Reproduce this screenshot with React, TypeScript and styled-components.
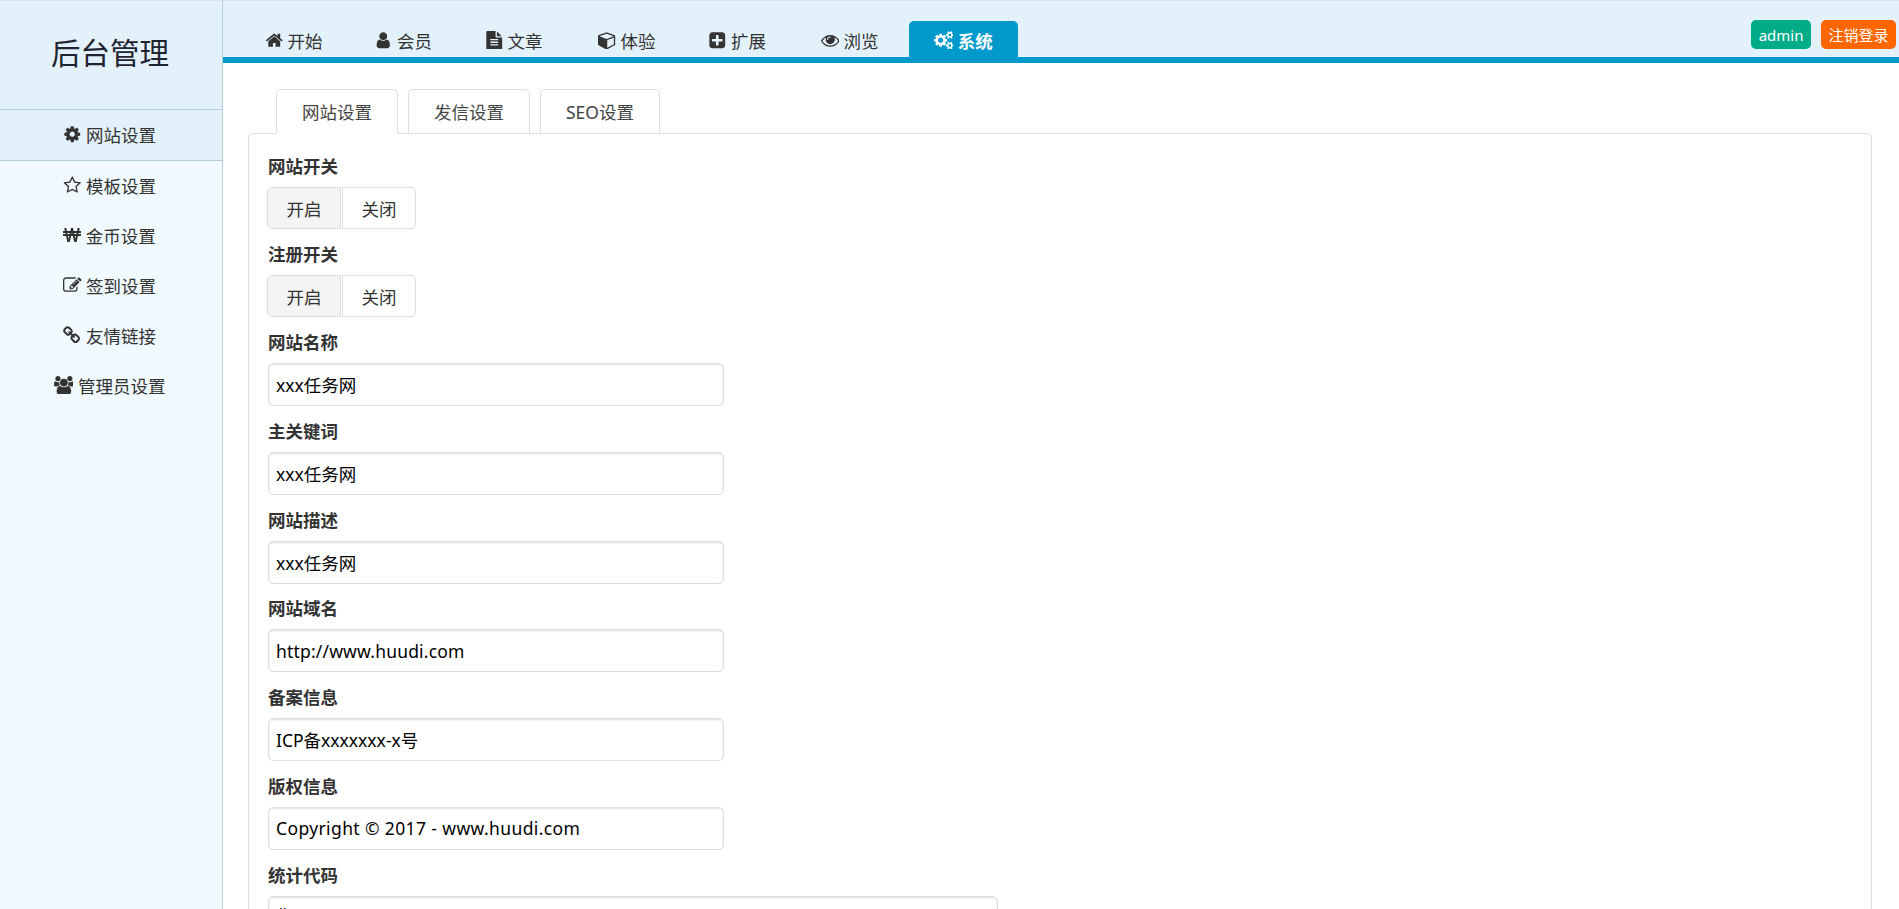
import { ReactNode } from "react";
import { FaWonSign } from "react-icons/fa";
import styled, { createGlobalStyle } from "styled-components";

const FONT = `"Noto Sans", "Noto Sans CJK SC", sans-serif`;

const GlobalStyle = createGlobalStyle`
  html, body {
    margin: 0;
    height: 100%;
    overflow: hidden;
    font-family: ${FONT};
    font-size: 17.5px;
    color: #333;
  }
  * {
    box-sizing: border-box;
  }
`;

// FontAwesome 4 glyphs as svg
const glyphs: Record<string, { w: number; d: string }> = {
  home: {
    w: 1792,
    d: "M1472 992v480q0 26-19 45t-45 19h-384v-384h-256v384h-384q-26 0-45-19t-19-45v-480q0-1 .5-3t.5-3l575-474 575 474q1 2 1 6zm223-69l-62 74q-8 9-21 11h-3q-13 0-21-7l-692-577-692 577q-12 8-24 7-13-2-21-11l-62-74q-8-10-7-23.500t11-21.500l719-599q32-26 76-26t76 26l244 204v-195q0-14 9-23t23-9h192q14 0 23 9t9 23v408l219 182q10 8 11 21.500t-7 23.500z",
  },
  user: {
    w: 1792,
    d: "M1536 1399q0 109-62.500 187t-150.500 78h-854q-88 0-150.500-78t-62.500-187q0-85 8.500-160.500t31.500-152 58.500-131 94-89 134.500-34.500q131 128 313 128t313-128q76 0 134.500 34.500t94 89 58.500 131 31.500 152 8.500 160.500zm-256-887q0 159-112.500 271.500t-271.500 112.500-271.500-112.500-112.500-271.500 112.500-271.500 271.500-112.500 271.500 112.500 112.500 271.500z",
  },
  file: {
    w: 1792,
    d: "M1596 476q14 14 28 36h-472v-472q22 14 36 28zm-476 164h544v1056q0 40-28 68t-68 28h-1344q-40 0-68-28t-28-68v-1600q0-40 28-68t68-28h800v544q0 40 28 68t68 28zm160 736v-64q0-14-9-23t-23-9h-704q-14 0-23 9t-9 23v64q0 14 9 23t23 9h704q14 0 23-9t9-23zm0-256v-64q0-14-9-23t-23-9h-704q-14 0-23 9t-9 23v64q0 14 9 23t23 9h704q14 0 23-9t9-23zm0-256v-64q0-14-9-23t-23-9h-704q-14 0-23 9t-9 23v64q0 14 9 23t23 9h704q14 0 23-9t9-23z",
  },
  cube: {
    w: 1792,
    d: "M896 1629l640-349v-636l-640 233v752zm-64-865l698-254-698-254-698 254zm832-252v768q0 35-18 65t-49 47l-704 384q-28 16-61 16t-61-16l-704-384q-31-17-49-47t-18-65v-768q0-40 23-73t61-47l704-256q22-8 44-8t44 8l704 256q38 14 61 47t23 73z",
  },
  plus: {
    w: 1792,
    d: "M1408 960v-128q0-26-19-45t-45-19h-320v-320q0-26-19-45t-45-19h-128q-26 0-45 19t-19 45v320h-320q-26 0-45 19t-19 45v128q0 26 19 45t45 19h320v320q0 26 19 45t45 19h128q26 0 45-19t19-45v-320h320q26 0 45-19t19-45zm256-544v960q0 119-84.500 203.500t-203.500 84.500h-960q-119 0-203.500-84.500t-84.500-203.500v-960q0-119 84.500-203.500t203.500-84.500h960q119 0 203.500 84.500t84.500 203.500z",
  },
  eye: {
    w: 1792,
    d: "M1664 960q-152-236-381-353 61 104 61 225 0 185-131.500 316.500t-316.500 131.500-316.500-131.500-131.500-316.500q0-121 61-225-229 117-381 353 133 205 333.500 326.500t434.500 121.500 434.500-121.500 333.500-326.500zm-720-384q0-20-14-34t-34-14q-125 0-214.500 89.500t-89.500 214.500q0 20 14 34t34 14 34-14 14-34q0-86 61-147t147-61q20 0 34-14t14-34zm848 384q0 34-20 69-140 230-376.500 368.500t-499.500 138.500-499.500-139-376.500-368q-20-35-20-69t20-69q140-229 376.500-368t499.500-139 499.500 139 376.500 368q20 35 20 69z",
  },
  cogs: {
    w: 1920,
    d: "M896 896q0-106-75-181t-181-75-181 75-75 181 75 181 181 75 181-75 75-181zm768 512q0-52-38-90t-90-38-90 38-38 90q0 53 37.500 90.500t90.500 37.500 90.500-37.500 37.500-90.500zm0-1024q0-52-38-90t-90-38-90 38-38 90q0 53 37.500 90.500t90.500 37.500 90.500-37.500 37.500-90.500zm-384 421v185q0 10-7 19.500t-16 10.500l-155 24q-11 35-32 76 34 48 90 115 7 11 7 20 0 12-7 19-23 30-82.500 89.500t-78.500 59.500q-11 0-21-7l-115-90q-37 19-77 31-11 108-23 155-7 24-30 24h-186q-11 0-20-7.500t-10-17.500l-23-153q-34-10-75-31l-118 89q-7 7-20 7-11 0-21-8-144-133-144-160 0-9 7-19 10-14 41-53t47-61q-23-44-35-82l-152-24q-10-1-17-9.500t-7-19.500v-185q0-10 7-19.500t16-10.500l155-24q11-35 32-76-34-48-90-115-7-11-7-20 0-12 7-20 22-30 82-89t79-59q11 0 21 7l115 90q34-18 77-32 11-108 23-154 7-24 30-24h186q11 0 20 7.500t10 17.500l23 153q34 10 75 31l118-89q8-7 20-7 11 0 21 8 144 133 144 160 0 8-7 19-12 16-42 54t-45 60q23 48 34 82l152 23q10 2 17 10.500t7 19.500zm640 533v140q0 16-149 31-12 27-30 52 51 113 51 138 0 4-4 7-122 71-124 71-8 0-46-47t-52-68q-20 2-30 2t-30-2q-14 21-52 68t-46 47q-2 0-124-71-4-3-4-7 0-25 51-138-18-25-30-52-149-15-149-31v-140q0-16 149-31 13-29 30-52-51-113-51-138 0-4 4-7 4-2 35-20t59-34 30-16q8 0 46 46.500t52 67.500q20-2 30-2t30 2q51-71 92-112l6-2q4 0 124 70 4 3 4 7 0 25-51 138 17 23 30 52 149 15 149 31zm0-1024v140q0 16-149 31-12 27-30 52 51 113 51 138 0 4-4 7-122 71-124 71-8 0-46-47t-52-68q-20 2-30 2t-30-2q-14 21-52 68t-46 47q-2 0-124-71-4-3-4-7 0-25 51-138-18-25-30-52-149-15-149-31v-140q0-16 149-31 13-29 30-52-51-113-51-138 0-4 4-7 4-2 35-20t59-34 30-16q8 0 46 46.500t52 67.500q20-2 30-2t30 2q51-71 92-112l6-2q4 0 124 70 4 3 4 7 0 25-51 138 17 23 30 52 149 15 149 31z",
  },
  cog: {
    w: 1792,
    d: "M1152 896q0-106-75-181t-181-75-181 75-75 181 75 181 181 75 181-75 75-181zm512-109v222q0 12-8 23t-20 13l-185 28q-19 54-39 91 35 50 107 138 10 12 10 25t-9 23q-27 37-99 108t-94 71q-12 0-26-9l-138-108q-44 23-91 38-16 136-29 186-7 28-36 28h-222q-14 0-24.500-8.500t-11.500-21.500l-28-184q-49-16-90-37l-141 107q-10 9-25 9-14 0-25-11-126-114-165-168-7-10-7-23 0-12 8-23 15-21 51-66.500t54-70.500q-27-50-41-99l-183-27q-13-2-21-12.500t-8-23.500v-222q0-12 8-23t19-13l186-28q14-46 39-92-40-57-107-138-10-12-10-24 0-10 9-23 26-36 98.500-107.500t94.500-71.500q13 0 26 10l138 107q44-23 91-38 16-136 29-186 7-28 36-28h222q14 0 24.500 8.500t11.500 21.500l28 184q49 16 90 37l142-107q9-9 24-9 13 0 25 10 129 119 165 170 7 8 7 22 0 12-8 23-15 21-51 66.500t-54 70.500q26 50 41 98l183 28q13 2 21 12.500t8 23.500z",
  },
  star: {
    w: 1792,
    d: "M1201 1004l306-297-422-62-189-382-189 382-422 62 306 297-73 421 378-199 377 199zm527-357q0 22-26 48l-363 354 86 500q1 7 1 20 0 50-41 50-19 0-40-12l-449-236-449 236q-22 12-40 12-21 0-31.500-14.500t-10.500-35.500q0-6 2-20l86-500-364-354q-25-27-25-48 0-37 56-46l502-73 225-455q19-41 49-41t49 41l225 455 502 73q56 9 56 46z",
  },
  edit: {
    w: 1792,
    d: "M888 1184l116-116-152-152-116 116v56h96v96h56zm440-720q-16-16-33 1l-350 350q-17 17-1 33t33-1l350-350q17-17 1-33zm80 594v190q0 119-84.500 203.500t-203.500 84.500h-832q-119 0-203.500-84.500t-84.500-203.500v-832q0-119 84.500-203.500t203.500-84.500h832q63 0 117 25 15 7 18 23 3 17-9 29l-49 49q-14 14-32 8-23-6-45-6h-832q-66 0-113 47t-47 113v832q0 66 47 113t113 47h832q66 0 113-47t47-113v-126q0-13 9-22l64-64q15-15 35-7t20 29zm-96-738l288 288-672 672h-288v-288zm444 132l-92 92-288-288 92-92q28-28 68-28t68 28l152 152q28 28 28 68t-28 68z",
  },
  link: {
    w: 1792,
    d: "M1456 1216q0-40-28-68l-208-208q-28-28-68-28-42 0-72 32 3 3 19 18.500t21.500 21.500 15 19 13 25.500 3.500 27.500q0 40-28 68t-68 28q-15 0-27.500-3.500t-25.500-13-19-15-21.500-21.500-18.500-19q-33 31-33 73 0 40 28 68l206 207q27 27 68 27 40 0 68-26l147-146q28-28 28-67zm-703-705q0-40-28-68l-206-207q-28-28-68-28-39 0-68 27l-147 146q-28 28-28 67 0 40 28 68l208 208q27 27 68 27 42 0 72-31-3-3-19-18.500t-21.500-21.500-15-19-13-25.500-3.500-27.500q0-40 28-68t68-28q15 0 27.500 3.500t25.500 13 19 15 21.500 21.500 18.500 19q33-31 33-73zm895 705q0 120-85 203l-147 146q-83 83-203 83-121 0-204-85l-206-207q-83-83-83-203 0-123 88-209l-88-88q-86 88-208 88-120 0-204-84l-208-208q-84-84-84-204t85-203l147-146q83-83 203-83 121 0 204 85l206 207q83 83 83 203 0 123-88 209l88 88q86-88 208-88 120 0 204 84l208 208q84 84 84 204z",
  },
  users: {
    w: 1920,
    d: "M593 896q-162 5-265 128h-134q-82 0-138-40.500t-56-118.500q0-353 124-353 6 0 43.500 21t97.500 42.500 119 21.500q67 0 133-23-5 37-5 66 0 139 81 256zm1071 637q0 120-73 189.500t-194 69.500h-874q-121 0-194-69.500t-73-189.500q0-53 3.500-103.500t14-109 26.500-108.500 43-97.500 62-81 85.500-53.500 111.500-20q10 0 43 21.500t73 48 107 48 135 21.500 135-21.500 107-48 73-48 43-21.500q61 0 111.500 20t85.500 53.500 62 81 43 97.500 26.500 108.500 14 109 3.500 103.500zm-1024-1277q0 106-75 181t-181 75-181-75-75-181 75-181 181-75 181 75 75 181zm704 384q0 159-112.500 271.500t-271.500 112.500-271.500-112.500-112.500-271.500 112.500-271.500 271.500-112.500 271.500 112.500 112.500 271.500zm576 225q0 78-56 118.500t-138 40.500h-134q-103-123-265-128 81-117 81-256 0-29-5-66 66 23 133 23 59 0 119-21.500t97.500-42.500 43.500-21q124 0 124 353zm-128-609q0 106-75 181t-181 75-181-75-75-181 75-181 181-75 181 75 75 181z",
  },
};

const IconSvg = styled.svg`
  flex: none;
  fill: currentColor;
`;

const Icon = ({ name, size = 18.5 }: { name: string; size?: number }) => {
  const g = glyphs[name];
  return (
    <IconSvg viewBox={`0 0 ${g.w} 1792`} width={(g.w / 1792) * size} height={size}>
      <path d={g.d} />
    </IconSvg>
  );
};

const Page = styled.div`
  display: grid;
  grid-template-columns: 223px 1fr;
  grid-template-rows: 63px 1fr;
  height: 100vh;
`;

const Logo = styled.div`
  height: 109px;
  flex: none;
  background: #e3f1fb;
  border-top: 1px solid #dde3e8;
  display: flex;
  align-items: center;
  justify-content: center;
  font-size: 29.5px;
  font-weight: 400;
  color: #1e2430;
  padding: 0 2px 8px 0;
`;

const Sidebar = styled.aside`
  grid-row: 1 / span 2;
  grid-column: 1;
  display: flex;
  flex-direction: column;
  background: #f0f9fd;
  border-right: 1px solid #b5cfd9;
  overflow: hidden;
`;

const SideItem = styled.div<{ $active?: boolean }>`
  height: ${(p) => (p.$active ? "52px" : "50px")};
  flex: none;
  display: flex;
  align-items: center;
  justify-content: center;
  gap: 4.5px;
  padding: 0 3px 2px 0;
  background: ${(p) => (p.$active ? "#e3f1fb" : "transparent")};
  border-top: ${(p) => (p.$active ? "1px solid #b5cfd9" : "0")};
  border-bottom: ${(p) => (p.$active ? "1px solid #b5cfd9" : "0")};
`;

const Header = styled.header`
  grid-row: 1;
  grid-column: 2;
  background: #e3f1fb;
  border-top: 1px solid #dde3e8;
  border-bottom: 6px solid #0099cc;
  display: flex;
  justify-content: space-between;
  padding: 19px 3px 0 16.5px;
`;

const NavTabs = styled.nav`
  display: flex;
  gap: 3px;
  margin-top: 1px;
`;

const NavTab = styled.div<{ $active?: boolean; $width?: number }>`
  display: flex;
  align-items: center;
  gap: 4.5px;
  width: ${(p) => (p.$width ? `${p.$width}px` : "auto")};
  height: 36px;
  padding: 2px 25px 0;
  white-space: nowrap;
  border-radius: 5px 5px 0 0;
  background: ${(p) => (p.$active ? "#0099cc" : "transparent")};
  color: ${(p) => (p.$active ? "#fff" : "#333")};
  font-weight: ${(p) => (p.$active ? 700 : 400)};
`;

const UserBox = styled.div`
  display: flex;
  gap: 10px;
`;

const Badge = styled.div<{ $bg: string }>`
  height: 29px;
  padding: 0 7.5px;
  display: flex;
  align-items: center;
  font-size: 15px;
  color: #fff;
  background: ${(p) => p.$bg};
  border-radius: 5px;
`;

const Main = styled.main`
  grid-row: 2;
  grid-column: 2;
  overflow-y: scroll;
  padding: 26px 27px 70px 25px;

  &::-webkit-scrollbar {
    width: 2px;
  }
  &::-webkit-scrollbar-button:start:decrement,
  &::-webkit-scrollbar-button:end:increment {
    display: block;
    height: 22px;
    background: #f1f1f1;
  }
  &::-webkit-scrollbar-track {
    background: #f1f1f1;
  }
  &::-webkit-scrollbar-thumb {
    background: #c1c1c1;
  }
`;

const TabRow = styled.div`
  display: flex;
  gap: 10px;
  padding-left: 28px;
  margin-bottom: -1px;
`;

const PageTab = styled.div<{ $active?: boolean }>`
  position: relative;
  height: 45px;
  padding: 0 25px;
  display: flex;
  align-items: center;
  border: 1px solid #ddd;
  border-bottom-color: ${(p) => (p.$active ? "#fff" : "#ddd")};
  border-radius: 5px 5px 0 0;
  background: #fff;
  color: #444;
  z-index: ${(p) => (p.$active ? 1 : 0)};
`;

const Panel = styled.section`
  border: 1px solid #ddd;
  border-radius: 5px;
  padding: 20px 19px 30px;
  display: flex;
  flex-direction: column;
`;

const Label = styled.div`
  height: 25px;
  line-height: 25px;
  font-weight: 700;
  margin-bottom: 8px;
`;

const Field = styled.div`
  height: 88.8px;
  flex: none;
`;

const SwitchField = styled(Field)`
  height: 88px;
`;

const Switch = styled.div`
  display: flex;
  gap: 1px;
  margin-left: -1px;
`;

const SwitchOption = styled.div<{ $on?: boolean; $side: "l" | "r" }>`
  width: 74px;
  height: 42px;
  display: flex;
  align-items: center;
  justify-content: center;
  border: 1px solid #ddd;
  background: ${(p) => (p.$on ? "#f4f4f4" : "#fff")};
  border-radius: ${(p) => (p.$side === "l" ? "5px 0 0 5px" : "0 5px 5px 0")};
`;

const TextInput = styled.input<{ $tracking?: number }>`
  display: block;
  width: 456px;
  height: 43px;
  padding: 0 7px;
  border: 1px solid #ddd;
  border-radius: 5px;
  box-shadow: inset 0 1px 2px rgba(0, 0, 0, 0.12);
  outline: 0;
  font-family: ${FONT};
  font-size: 17.5px;
  letter-spacing: ${(p) => p.$tracking ?? 0}px;
  color: #000;
  background: #fff;
`;

const TextArea = styled.textarea`
  display: block;
  width: 730px;
  height: 150px;
  padding: 5px 7px;
  border: 1px solid #ddd;
  border-radius: 5px;
  box-shadow: inset 0 1px 2px rgba(0, 0, 0, 0.12);
  outline: 0;
  resize: none;
  font-family: ${FONT};
  font-size: 17.5px;
  color: #000;
`;

const navItems: { icon: string; text: string; width?: number; active?: boolean }[] = [
  { icon: "home", text: "开始", width: 106.5 },
  { icon: "user", text: "会员", width: 107.5 },
  { icon: "file", text: "文章", width: 110 },
  { icon: "cube", text: "体验", width: 107.5 },
  { icon: "plus", text: "扩展", width: 109.5 },
  { icon: "eye", text: "浏览", width: 110 },
  { icon: "cogs", text: "系统", active: true },
];

const sideItems: { icon: ReactNode; text: string; active?: boolean }[] = [
  { icon: <Icon name="cog" />, text: "网站设置", active: true },
  { icon: <Icon name="star" />, text: "模板设置" },
  { icon: <FaWonSign size={18} />, text: "金币设置" },
  { icon: <Icon name="edit" />, text: "签到设置" },
  { icon: <Icon name="link" />, text: "友情链接" },
  { icon: <Icon name="users" />, text: "管理员设置" },
];

const inputs: { label: string; value: string; tracking?: number }[] = [
  { label: "网站名称", value: "xxx任务网" },
  { label: "主关键词", value: "xxx任务网" },
  { label: "网站描述", value: "xxx任务网" },
  { label: "网站域名", value: "http://www.huudi.com", tracking: 0.18 },
  { label: "备案信息", value: "ICP备xxxxxxx-x号" },
  { label: "版权信息", value: "Copyright © 2017 - www.huudi.com", tracking: 0.38 },
];

const OnOffField = ({ label }: { label: string }) => (
  <SwitchField>
    <Label>{label}</Label>
    <Switch>
      <SwitchOption $side="l" $on>
        开启
      </SwitchOption>
      <SwitchOption $side="r">关闭</SwitchOption>
    </Switch>
  </SwitchField>
);

export default function App() {
  return (
    <Page>
      <GlobalStyle />
      <Sidebar>
        <Logo>后台管理</Logo>
        {sideItems.map((s) => (
          <SideItem key={s.text} $active={s.active}>
            {s.icon}
            <span>{s.text}</span>
          </SideItem>
        ))}
      </Sidebar>
      <Header>
        <NavTabs>
          {navItems.map((n) => (
            <NavTab key={n.text} $active={n.active} $width={n.width}>
              <Icon name={n.icon} />
              <span>{n.text}</span>
            </NavTab>
          ))}
        </NavTabs>
        <UserBox>
          <Badge $bg="#00ab88">admin</Badge>
          <Badge $bg="#ff6600">注销登录</Badge>
        </UserBox>
      </Header>
      <Main>
        <TabRow>
          <PageTab $active>网站设置</PageTab>
          <PageTab>发信设置</PageTab>
          <PageTab>SEO设置</PageTab>
        </TabRow>
        <Panel>
          <OnOffField label="网站开关" />
          <OnOffField label="注册开关" />
          {inputs.map((f) => (
            <Field key={f.label}>
              <Label>{f.label}</Label>
              <TextInput defaultValue={f.value} $tracking={f.tracking} readOnly />
            </Field>
          ))}
          <Label>统计代码</Label>
          <TextArea defaultValue="#" readOnly />
        </Panel>
      </Main>
    </Page>
  );
}
